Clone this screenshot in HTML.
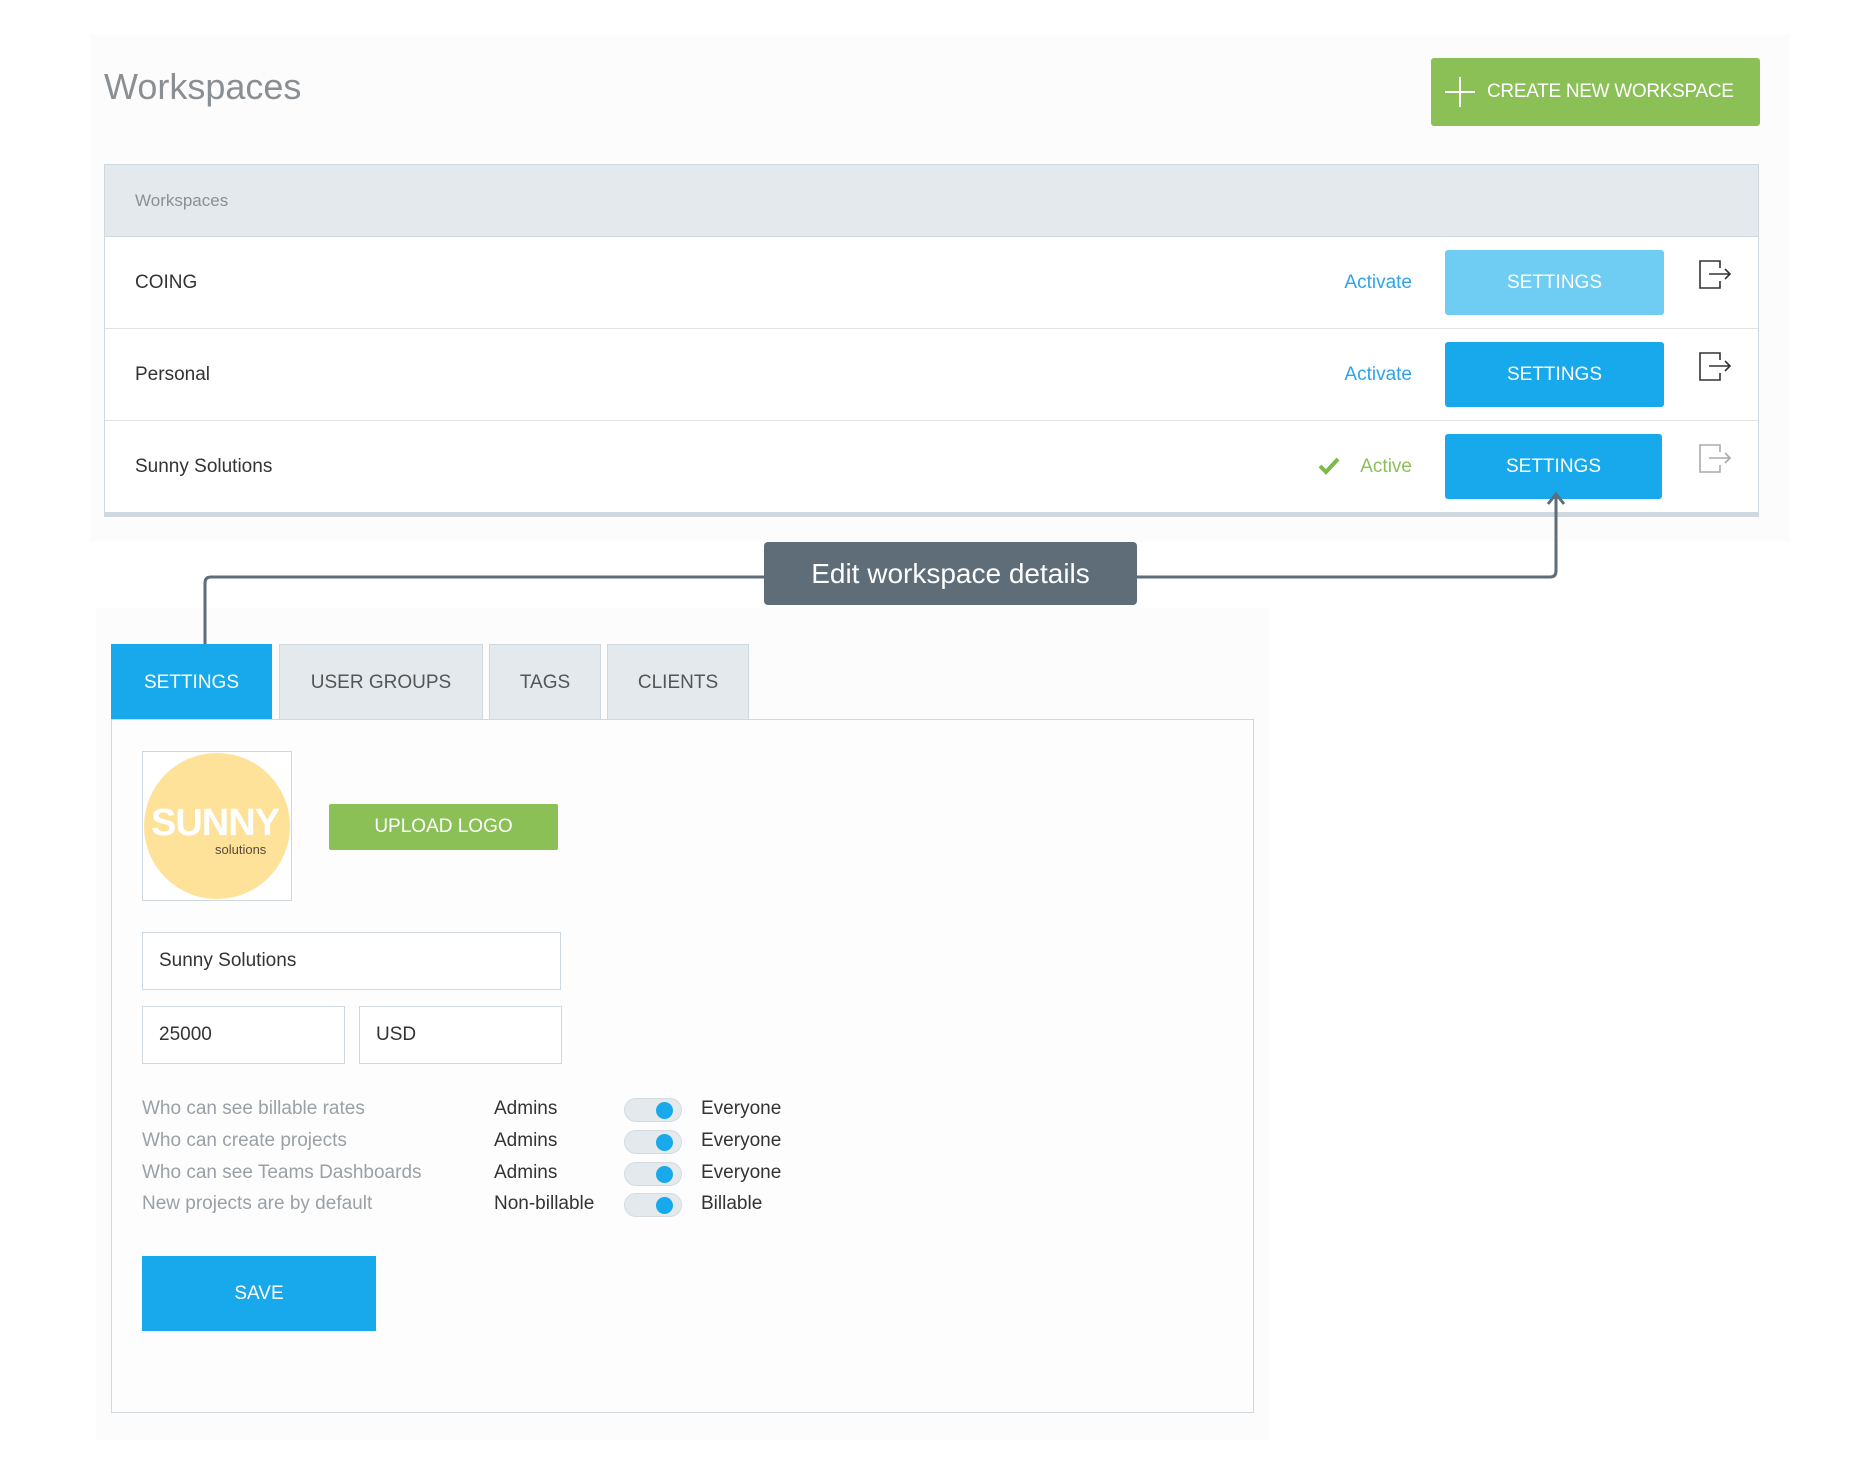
<!DOCTYPE html>
<html><head><meta charset="utf-8"><style>
*{box-sizing:border-box;margin:0;padding:0}
body{width:1860px;height:1466px;background:#fff;position:relative;font-family:"Liberation Sans",sans-serif;overflow:hidden}
.a{position:absolute}
.bg1{left:90px;top:34px;width:1700px;height:508px;background:#fcfcfc}
.bg2{left:96px;top:608px;width:1174px;height:832px;background:#fcfcfc}
.title{left:104px;top:66px;font-size:36px;color:#8a8f94}
.create{left:1431px;top:58px;width:329px;height:68px;background:#8bc056;border-radius:3px;color:#fff;font-size:19px;line-height:68px;padding-left:56px;letter-spacing:-0.3px;white-space:nowrap}
.table{left:104px;top:164px;width:1655px;height:353px;border:1px solid #cfd8de;background:#fff;border-bottom:5px solid #cfd8de}
.thead{left:0;top:0;width:100%;height:72px;background:#e4e9ed;border-bottom:1px solid #cfd8de;font-size:17px;color:#8a8f94;line-height:72px;padding-left:30px}
.row{left:0;width:100%;height:92px;border-bottom:1px solid #dde3e7;font-size:19px;color:#333}
.row .n{left:30px;top:0;line-height:92px}
.act{right:346px;line-height:92px;color:#2fa3e8}
.btn{left:1340px;top:13px;width:219px;height:65px;background:#18a8ec;border-radius:3px;color:#fff;text-align:center;line-height:65px;font-size:19px}
.tip{left:764px;top:542px;width:373px;height:63px;background:#5e6d77;border-radius:4px;color:#fff;font-size:28px;text-align:center;line-height:63px}
.tab{top:644px;height:76px;background:#e4e9ed;border:1px solid #cfd8de;border-bottom:none;color:#555;font-size:19px;text-align:center;line-height:76px}
.panel{left:111px;top:719px;width:1143px;height:694px;border:1px solid #cfd8de;background:#fdfdfd}
.inp{background:#fff;border:1px solid #cfd8de;font-size:19px;color:#333;padding-left:16px}
.lbl{font-size:19px;color:#9aa0a5}
.v{font-size:19px;color:#333}
.tg{width:58px;height:24px;background:#e4e9ed;border:1px solid #d5dbe0;border-radius:12px}
.tg i{position:absolute;right:8px;top:3px;width:17px;height:17px;border-radius:50%;background:#18a8ec}
</style></head><body>
<div class="a bg1"></div><div class="a bg2"></div>
<div class="a title">Workspaces</div>
<div class="a create"><svg class="a" style="left:14px;top:19px" width="30" height="30"><path d="M15 0V30M0 15H30" stroke="#fff" stroke-width="2"/></svg>CREATE NEW WORKSPACE</div>
<div class="a table">
 <div class="a thead">Workspaces</div>
 <div class="a row" style="top:72px"><div class="a n">COING</div><div class="a act">Activate</div><div class="a btn" style="background:#6fccf2">SETTINGS</div>
  <svg class="a" style="left:1593px;top:22px" width="34" height="32"><path d="M22 9V2H2V29H22V22M11 15H32M27 10L32 15L27 20" fill="none" stroke="#333" stroke-width="1.6"/></svg></div>
 <div class="a row" style="top:164px"><div class="a n">Personal</div><div class="a act">Activate</div><div class="a btn">SETTINGS</div>
  <svg class="a" style="left:1593px;top:22px" width="34" height="32"><path d="M22 9V2H2V29H22V22M11 15H32M27 10L32 15L27 20" fill="none" stroke="#333" stroke-width="1.6"/></svg></div>
 <div class="a row" style="top:256px;border-bottom:none"><div class="a n">Sunny Solutions</div>
  <svg class="a" style="left:1213px;top:36px" width="22" height="18"><path d="M2 9L8 15L20 2" fill="none" stroke="#7cb94a" stroke-width="4"/></svg>
  <div class="a act" style="color:#8bc056">Active</div><div class="a btn" style="width:217px">SETTINGS</div>
  <svg class="a" style="left:1593px;top:22px" width="34" height="32"><path d="M22 9V2H2V29H22V22M11 15H32M27 10L32 15L27 20" fill="none" stroke="#aaa" stroke-width="1.6"/></svg></div>
</div>
<svg class="a" style="left:0;top:0" width="1860" height="700"><path d="M205 644V583Q205 577 211 577H765M1137 577H1550Q1556 577 1556 571V494M1548 504L1556 494L1564 504" fill="none" stroke="#5e6d77" stroke-width="3"/></svg>
<div class="a tip">Edit workspace details</div>
<div class="a tab" style="left:111px;width:161px;background:#18a8ec;color:#fff;border-color:#18a8ec">SETTINGS</div>
<div class="a tab" style="left:279px;width:204px">USER GROUPS</div>
<div class="a tab" style="left:489px;width:112px">TAGS</div>
<div class="a tab" style="left:607px;width:142px">CLIENTS</div>
<div class="a panel"></div>
<div class="a" style="left:142px;top:751px;width:150px;height:150px;border:1px solid #cfd8de;background:#fff"><div class="a" style="left:1px;top:1px;width:146px;height:146px;border-radius:50%;background:#fee29a"></div>
<div class="a" style="left:8px;top:50px;font-size:38px;font-weight:bold;color:#fff;letter-spacing:-1px">SUNNY</div>
<div class="a" style="left:72px;top:90px;font-size:13px;color:#5a4a3a">solutions</div></div>
<div class="a" style="left:329px;top:804px;width:229px;height:46px;background:#8bc056;border-radius:2px;color:#fff;font-size:19px;text-align:center;line-height:46px">UPLOAD LOGO</div>
<div class="a inp" style="left:142px;top:932px;width:419px;height:58px;line-height:56px">Sunny Solutions</div>
<div class="a inp" style="left:142px;top:1006px;width:203px;height:58px;line-height:56px">25000</div>
<div class="a inp" style="left:359px;top:1006px;width:203px;height:58px;line-height:56px">USD</div>
<div class="a lbl" style="left:142px;top:1098px">Who can see billable rates</div>
<div class="a lbl" style="left:142px;top:1130px">Who can create projects</div>
<div class="a lbl" style="left:142px;top:1162px">Who can see Teams Dashboards</div>
<div class="a lbl" style="left:142px;top:1193px">New projects are by default</div>
<div class="a v" style="left:494px;top:1098px">Admins</div>
<div class="a v" style="left:494px;top:1130px">Admins</div>
<div class="a v" style="left:494px;top:1162px">Admins</div>
<div class="a v" style="left:494px;top:1193px">Non-billable</div>
<div class="a tg" style="left:624px;top:1098px"><i></i></div>
<div class="a tg" style="left:624px;top:1130px"><i></i></div>
<div class="a tg" style="left:624px;top:1162px"><i></i></div>
<div class="a tg" style="left:624px;top:1193px"><i></i></div>
<div class="a v" style="left:701px;top:1098px">Everyone</div>
<div class="a v" style="left:701px;top:1130px">Everyone</div>
<div class="a v" style="left:701px;top:1162px">Everyone</div>
<div class="a v" style="left:701px;top:1193px">Billable</div>
<div class="a" style="left:142px;top:1256px;width:234px;height:75px;background:#18a8ec;color:#fff;font-size:19px;text-align:center;line-height:75px">SAVE</div>
</body></html>
